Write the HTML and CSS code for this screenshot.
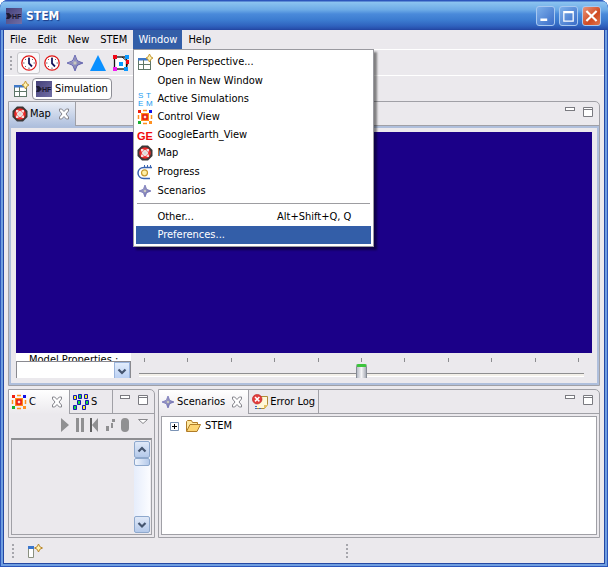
FILE: index.html
```html
<!DOCTYPE html>
<html lang="en">
<head>
<meta charset="utf-8">
<title>STEM</title>
<link rel="stylesheet" href="styles.css">
</head>
<body>
<svg class="defs" aria-hidden="true">
  <defs>
    <linearGradient id="hfFill" x1="0" y1="0" x2="1" y2="1">
      <stop offset="0" stop-color="#454079"/><stop offset="1" stop-color="#716fa6"/>
    </linearGradient>
    <linearGradient id="gemFill" x1="0" y1="0" x2="1" y2="1">
      <stop offset="0" stop-color="#c4c4ec"/><stop offset="1" stop-color="#5a5aa0"/>
    </linearGradient>
    <symbol id="hf" viewBox="0 0 16 16">
      <rect width="16" height="16" fill="url(#hfFill)"/>
      <path d="M0 5h3l3 3-3 3H0l1.500-3z" fill="#1c1a33"/>
      <text x="6" y="11" class="hf-text">HF</text>
    </symbol>
    <symbol id="clock" viewBox="0 0 16 16">
      <circle cx="8" cy="8" r="7.200" fill="#fff" stroke="#e01818" stroke-width="1.300"/>
      <path d="M8 2v1.500M8 12.500V14M2 8h1.500M12.500 8H14M4 4l1 1M12 4l-1 1M4 12l1-1" stroke="#445" stroke-width=".8"/>
      <path d="M8 3v5.500l3 3" stroke="#16165c" stroke-width="1.800" fill="none"/>
    </symbol>
    <symbol id="gem" viewBox="0 0 16 16">
      <path d="M8 0l2 5 1 1 5 2-5 2-1 1-2 5-2-5-1-1-5-2 5-2 1-1z" fill="url(#gemFill)" stroke="#5858a8" stroke-width=".8"/>
      <path d="M8 3v10M3 8h10" stroke="#8c8cb4" stroke-width="1.500"/>
      <rect x="6.500" y="6.500" width="3" height="3" fill="#c8c8c0"/>
    </symbol>
    <symbol id="graph" viewBox="0 0 16 16">
      <rect x="1.500" y="2" width="12" height="12" fill="#fff" stroke="#111" stroke-width="1.300"/>
      <path d="M9 2l6 5-2 7" stroke="#111" fill="none"/>
      <path d="M0 0h4v4H0z" fill="#f00818"/><path d="M12 0h4v4h-4zM6 7h4v4H6zM11 12h4v4h-4z" fill="#0a98ff"/>
      <path d="M0 12h4v4H0z" fill="#f018f0"/><path d="M13 5h3v4h-3z" fill="#f00818"/>
    </symbol>
    <symbol id="persp" viewBox="0 0 16 16">
      <rect x="1.500" y="4.500" width="12" height="11" fill="#fff" stroke="#5f7668"/>
      <path d="M1 4h10v2.500H1z" fill="#3f78c8"/>
      <path d="M6.500 6v9M2 10.500h11" stroke="#5f7668"/>
      <path d="M12.500 0l1.500 3 2 1-2 1.200L12.500 8 11 5.200 9 4l2-1z" fill="#fff2b0" stroke="#c0922a" stroke-width=".9"/>
    </symbol>
    <symbol id="stem" viewBox="0 0 16 16">
      <g class="stem-text"><text x="1" y="7">S</text><text x="9" y="7">T</text><text x="1" y="15">E</text><text x="9" y="15">M</text></g>
    </symbol>
    <symbol id="control" viewBox="0 0 16 16">
      <path d="M1 1h3v3H1z" fill="#f02010"/><path d="M12 1h3v3h-3z" fill="#1010e8"/>
      <path d="M1 12h3v3H1z" fill="#18b030"/><path d="M12 12h3v3h-3z" fill="#ff9020"/>
      <path d="M6 1.500h4M6 14.500h4M1.500 6v4M14.500 6v4" stroke="#ff9020" stroke-width="1.500"/>
      <rect x="4" y="4" width="8" height="8" fill="#ff8a18"/><rect x="6" y="6" width="4" height="4" fill="#ffe0d0" stroke="#e81010" stroke-width="1.500"/>
    </symbol>
    <symbol id="ge" viewBox="0 0 16 16">
      <text x="0" y="13" class="ge-text">GE</text>
    </symbol>
    <symbol id="map" viewBox="0 0 16 16">
      <path d="M5 .5h6L15.500 5v6L11 15.500H5L.5 11V5z" fill="#3c3838"/>
      <circle cx="8" cy="8" r="5.800" fill="#ea2a2a"/>
      <path d="M8 4.500L11.500 8 8 11.500 4.500 8z" fill="#f4f0f0"/>
      <path d="M4 4h2.500v2.500H4zM9.500 4H12v2.500H9.500zM4 9.500h2.500V12H4zM9.500 9.500H12V12H9.500z" fill="#f6dcdc"/>
      <path d="M6.500 6.500h3v3h-3z" fill="#d8d8d8"/>
    </symbol>
    <symbol id="progress" viewBox="0 0 16 16">
      <path d="M15 3.500H7c-8 0-8 11 0 11h6" fill="none" stroke="#3b64b0" stroke-width="1.500"/>
      <path d="M7.500 1v2.500M10.500 1v2.500M13.500 1v2.500" stroke="#3b64b0"/>
      <circle cx="7.500" cy="8.800" r="3" fill="#fff0a8" stroke="#c89a30" stroke-width="1.200"/>
    </symbol>
    <symbol id="cross" viewBox="0 0 12 12">
      <path d="M1.500 1h2.200L6 3.500 8.300 1h2.200v2L8 6l2.500 3v2H8.300L6 8.500 3.700 11H1.500V9L4 6 1.500 3z" fill="#fff" stroke="#85858c"/>
    </symbol>
    <symbol id="min" viewBox="0 0 12 12"><rect x="1.500" y="1.500" width="9" height="3" fill="#fff" stroke="#7a7a80"/></symbol>
    <symbol id="max" viewBox="0 0 12 12"><path d="M1.500 1.500h9v9h-9zM1.500 3.500h9" fill="#fff" stroke="#7a7a80"/></symbol>
    <symbol id="nodes" viewBox="0 0 16 16">
      <g stroke="#1616b8"><path d="M.5 1.500h3v4h-3zM11.500.500h3v4h-3zM9.500 11.500h3v4h-3z" fill="#f4f020"/>
      <path d="M5.500.500h3v4h-3zM4.500 6.500h3v4h-3zM12.500 6.500h3v4h-3zM.5 11.500h3v4h-3z" fill="#18d838"/></g>
    </symbol>
    <symbol id="error" viewBox="0 0 16 16">
      <path d="M6 2.500h9.500v8l-3 4H4.500" fill="#fff8d8" stroke="#b08c38"/>
      <path d="M12 15v-4h4z" fill="#e8c060"/>
      <path d="M3 12.500h2M3 14.500h2M7 14.500h2" stroke="#3c6cc0"/>
      <circle cx="5.200" cy="5.200" r="4.800" fill="#e23c3c" stroke="#b82020" stroke-width=".6"/>
      <path d="M3 3l4.400 4.400M7.400 3L3 7.400" stroke="#fff" stroke-width="1.500"/>
    </symbol>
    <symbol id="up" viewBox="0 0 10 10"><path d="M1.500 6.500L5 3l3.500 3.500" fill="none" stroke="#45556f" stroke-width="2.200"/></symbol>
    <symbol id="down" viewBox="0 0 10 10"><path d="M1.500 3L5 6.500 8.500 3" fill="none" stroke="#45556f" stroke-width="2.200"/></symbol>
  </defs>
</svg>

<div class="window">
  <header class="titlebar">
    <svg class="icon"><use href="#hf"/></svg>
    <h1 class="title">STEM</h1>
    <button class="caption" aria-label="Minimize"><svg viewBox="0 0 20 20"><path d="M4 13h8v3H4z" fill="#fff"/></svg></button>
    <button class="caption" aria-label="Maximize"><svg viewBox="0 0 20 20"><path d="M4.500 5h11v11h-11zM4 6h12" fill="none" stroke="#fff" stroke-width="1.500"/></svg></button>
    <button class="caption caption-close" aria-label="Close"><svg viewBox="0 0 20 20"><path d="M4 4l12 12M16 4L4 16" stroke="#fff" stroke-width="2.500"/></svg></button>
  </header>

  <div class="client">
    <nav class="menubar">
      <button class="menu-title">File</button>
      <button class="menu-title">Edit</button>
      <button class="menu-title">New</button>
      <button class="menu-title">STEM</button>
      <div class="menu-holder">
        <button class="menu-title menu-open" aria-expanded="true">Window</button>
        <div class="menu" role="menu">
          <button class="item item-tall" role="menuitem"><svg class="icon"><use href="#persp"/></svg><span>Open Perspective...</span></button>
          <button class="item" role="menuitem"><span class="icon"></span><span>Open in New Window</span></button>
          <button class="item" role="menuitem"><svg class="icon"><use href="#stem"/></svg><span>Active Simulations</span></button>
          <button class="item" role="menuitem"><svg class="icon"><use href="#control"/></svg><span>Control View</span></button>
          <button class="item" role="menuitem"><svg class="icon"><use href="#ge"/></svg><span>GoogleEarth_View</span></button>
          <button class="item" role="menuitem"><svg class="icon"><use href="#map"/></svg><span>Map</span></button>
          <button class="item item-tall" role="menuitem"><svg class="icon"><use href="#progress"/></svg><span>Progress</span></button>
          <button class="item" role="menuitem"><svg class="icon icon-inset"><use href="#gem"/></svg><span>Scenarios</span></button>
          <hr class="rule">
          <button class="item" role="menuitem"><span class="icon"></span><span>Other...</span><span class="shortcut">Alt+Shift+Q, Q</span></button>
          <button class="item item-active" role="menuitem"><span class="icon"></span><span>Preferences...</span></button>
        </div>
      </div>
      <button class="menu-title">Help</button>
    </nav>

    <div class="toolbar">
      <span class="grip"></span>
      <button class="tool tool-hot" aria-label="Run"><svg class="icon"><use href="#clock"/></svg></button>
      <button class="tool" aria-label="Step"><svg class="icon"><use href="#clock"/></svg></button>
      <button class="tool" aria-label="New scenario"><svg class="icon"><use href="#gem"/></svg></button>
      <button class="tool" aria-label="New model"><svg class="icon" viewBox="0 0 16 16"><path d="M8 0l8 16H0z" fill="#0a90ff"/></svg></button>
      <button class="tool" aria-label="New graph"><svg class="icon"><use href="#graph"/></svg></button>
    </div>

    <div class="perspectives">
      <button class="tool" aria-label="Open perspective"><svg class="icon"><use href="#persp"/></svg></button>
      <button class="perspective"><svg class="icon"><use href="#hf"/></svg>Simulation</button>
    </div>

    <main class="workbench">
      <section class="view view-active">
        <div class="tabs">
          <button class="tab tab-focus"><svg class="icon"><use href="#map"/></svg>Map<svg class="cross"><use href="#cross"/></svg></button>
          <div class="view-buttons">
            <button aria-label="Minimize view"><svg><use href="#min"/></svg></button>
            <button aria-label="Maximize view"><svg><use href="#max"/></svg></button>
          </div>
        </div>
        <div class="map-body">
          <div class="canvas"></div>
          <div class="map-controls">
            <div class="model">
              <label class="model-label" for="model">Model Properties :</label>
              <div class="combo">
                <select id="model"><option></option></select>
                <svg class="combo-arrow"><use href="#down"/></svg>
              </div>
            </div>
            <div class="scale">
              <div class="ticks"><i></i><i></i><i></i><i></i><i></i><i></i><i></i><i></i><i></i><i></i><i></i></div>
              <input class="slider" type="range" min="0" max="100" value="50" aria-label="Gain">
            </div>
          </div>
        </div>
      </section>

      <div class="lower">
        <section class="view view-left">
          <div class="tabs">
            <button class="tab tab-wide"><svg class="icon"><use href="#control"/></svg>C<svg class="cross"><use href="#cross"/></svg></button>
            <button class="tab tab-back"><svg class="icon"><use href="#nodes"/></svg>S</button>
            <div class="view-buttons">
              <button aria-label="Minimize view"><svg><use href="#min"/></svg></button>
              <button aria-label="Maximize view"><svg><use href="#max"/></svg></button>
            </div>
          </div>
          <div class="playbar">
            <svg viewBox="0 0 88 16">
              <g fill="#909092"><path d="M1 1l8 7-8 7zM16 1h3v14h-3zM21 1h3v14h-3zM38 1v14l-6-7zM46 9h3v5h-3zM51 6h2v5h-2zM52 2h3v3h-3z"/><rect x="61" y="1" width="8" height="14" rx="4"/></g>
              <path d="M31 1v14" stroke="#333" stroke-width="1.500"/>
              <path d="M78.500 2.500h9L83 6.500z" fill="#fff" stroke="#88888c"/>
            </svg>
          </div>
          <div class="pane pane-scroll">
            <div class="scrollbar">
              <button aria-label="Scroll up"><svg><use href="#up"/></svg></button>
              <span class="scroll-thumb"></span>
              <button class="scroll-end" aria-label="Scroll down"><svg><use href="#down"/></svg></button>
            </div>
          </div>
        </section>

        <section class="view view-right">
          <div class="tabs">
            <button class="tab tab-scenarios"><svg class="icon icon-inset"><use href="#gem"/></svg>Scenarios<svg class="cross"><use href="#cross"/></svg></button>
            <button class="tab tab-back"><svg class="icon"><use href="#error"/></svg>Error Log</button>
            <div class="view-buttons">
              <button aria-label="Minimize view"><svg><use href="#min"/></svg></button>
              <button aria-label="Maximize view"><svg><use href="#max"/></svg></button>
            </div>
          </div>
          <div class="pane pane-tree">
            <button class="tree-row">
              <svg class="expander" viewBox="0 0 9 9"><path d="M.5.500h8v8h-8z" fill="#fff" stroke="#7b93b5"/><path d="M2 4.500h5M4.500 2v5" stroke="#000"/></svg>
              <svg class="icon" viewBox="0 0 16 16"><path d="M1.500 13V3.500l1-1h4l1 2h5V7" fill="#ffe9a0" stroke="#b07c28"/><path d="M1.500 13.500l3.500-7h10.500l-3.500 7z" fill="#fcd472" stroke="#b07c28"/></svg>
              STEM
            </button>
          </div>
        </section>
      </div>
    </main>

    <footer class="status">
      <div class="status-part"><span class="grip"></span>
        <svg class="icon" viewBox="0 0 16 16"><path d="M1.500 3.500h5v11h-5z" fill="#fff" stroke="#8a9080"/><path d="M1 3h6v3H1z" fill="#3a76cc"/><path d="M11.500 1l1.300 2.700L15.500 5l-2.700 1.300L11.500 9l-1.300-2.700L7.500 5l2.700-1.300z" fill="#fff2b0" stroke="#b8862c"/></svg>
      </div>
      <div class="status-part"><span class="grip"></span></div>
    </footer>
  </div>
</div>
</body>
</html>
```
FILE: styles.css
```css
* { box-sizing: border-box; }

:root {
  --face: #ebe9ed;
  --line: #a0a0a6;
  --blue: #335ea8;
}

html, body { height: 100%; }

body {
  margin: 0;
  background: #fff;
  color: #000;
  font-family: "DejaVu Sans Condensed", "DejaVu Sans", Tahoma, sans-serif;
  font-size: 11px;
  line-height: 14px;
}

button {
  margin: 0;
  padding: 0;
  border: 0;
  background: none;
  color: inherit;
  font: inherit;
  white-space: nowrap;
}

svg { display: block; flex: none; }
.defs { position: absolute; width: 0; height: 0; }
.icon { flex: none; width: 16px; height: 16px; }
.icon-inset { padding: 2px; }
.hf-text { fill: #17152b; font: bold 7px "Liberation Sans", sans-serif; }
.stem-text { fill: #1a9af0; font: 8px "Liberation Sans", sans-serif; }
.ge-text { fill: #f00c0c; font: bold 11px "Liberation Sans", sans-serif; }

.window {
  display: flex;
  flex-direction: column;
  height: 100%;
  padding: 0 4px 4px;
  overflow: hidden;
  border-radius: 8px 8px 0 0;
  background: #3a6fd0;
  box-shadow: inset 0 0 0 1px #2c56bc, inset 0 0 0 3px #6f9ee0;
}

.titlebar {
  display: flex;
  align-items: center;
  flex: none;
  gap: 4px;
  height: 30px;
  margin: 0 -4px;
  padding: 2px 7px 0 6px;
  border-radius: 8px 8px 0 0;
  background: linear-gradient(#2c56bc 0, #2c56bc 1px, #8cc4f0 2px, #6caae6 10px, #4a8ada 14px, #3c7cd0 20px, #2f62be 26px, #2448a4 30px);
}

.title {
  flex: 1;
  margin: 0;
  color: #fff;
  font-size: 12px;
  line-height: 18px;
  text-shadow: 1px 1px 1px #1c3c88;
}

.caption {
  width: 19px;
  height: 20px;
  border: 1px solid #a8c8f0;
  border-radius: 3px;
  background: linear-gradient(135deg, #7db0ea, #3a6cc8);
}
.caption svg { width: 100%; height: 100%; }
.caption-close { background: linear-gradient(135deg, #e8957c, #d04a22 60%, #e07850); }

.client {
  display: flex;
  flex: 1;
  flex-direction: column;
  min-height: 0;
  background: var(--face);
  box-shadow: 0 0 0 1px #2448a4;
}

.menubar {
  display: flex;
  flex: none;
  gap: 1px;
  height: 20px;
  padding-left: 1px;
  border-bottom: 1px solid #fff;
}
.menu-title { height: 19px; padding: 0 5px; }
.menu-holder { position: relative; }
.menu-open { background: var(--blue); color: #fff; }

.menu {
  position: absolute;
  z-index: 2;
  top: 19px;
  left: 0;
  width: 241px;
  padding: 2px;
  border: 1px solid #9a9aa0;
  background: #fff;
  box-shadow: 3px 3px 2px rgba(0, 0, 0, .45);
}
.item {
  display: flex;
  align-items: center;
  gap: 4px;
  width: 100%;
  height: 18px;
  padding: 0 20px 0 1px;
  text-align: left;
}
.item-tall { height: 20px; }
.item-active { background: var(--blue); color: #fff; }
.shortcut { margin-left: auto; }
.rule { height: 1px; margin: 3px 1px 4px; border: 0; background: #9d9da1; }

.toolbar, .perspectives {
  display: flex;
  align-items: center;
  flex: none;
  height: 26px;
  padding: 0 5px;
  border-bottom: 1px solid #fff;
}
.perspectives { height: 25px; border: 0; }
.grip {
  width: 3px;
  height: 14px;
  margin: 0 4px 0 1px;
  background: radial-gradient(circle at 1px 1px, #a6a6ac 1px, transparent 1px) 0 0 / 3px 4px;
}
.tool {
  display: flex;
  align-items: center;
  justify-content: center;
  width: 23px;
  height: 22px;
}
.tool-hot { border: 1px solid #c8c8cc; border-radius: 3px; background: #f8f8fa; }
.perspective {
  display: flex;
  align-items: center;
  gap: 3px;
  height: 22px;
  padding: 0 3px;
  border: 1px solid #8e8e96;
  border-radius: 4px;
  background: #fff;
}

.workbench {
  display: flex;
  flex: 1;
  flex-direction: column;
  gap: 3px;
  min-height: 0;
  padding: 0 4px;
}
.view {
  display: flex;
  flex-direction: column;
  min-width: 0;
  border: 1px solid var(--line);
  border-radius: 0 5px 0 0;
}
.view-active { flex: 1; min-height: 0; }

.tabs {
  display: flex;
  flex: none;
  height: 24px;
  border-bottom: 1px solid var(--line);
}
.tab {
  display: flex;
  align-items: center;
  gap: 2px;
  margin-bottom: -1px;
  padding: 0 5px 0 3px;
  border-right: 1px solid var(--line);
  background: linear-gradient(#fff, var(--face));
}
.tab-focus { background: linear-gradient(#e9edf6, #afc0de); }
.tab-back { min-width: 43px; margin: 0; padding: 0 3px; background: none; }
.cross { width: 12px; height: 12px; margin-left: 5px; }
.tab-wide .cross { margin-left: auto; }
.tab-wide { width: 61px; padding: 0 6px 0 2px; }
.view-buttons {
  display: flex;
  gap: 6px;
  margin-left: auto;
  padding: 4px 5px 0 0;
}
.view-buttons button { height: 12px; }
.view-buttons svg { width: 12px; height: 12px; }

.map-body {
  display: flex;
  flex: 1;
  flex-direction: column;
  min-height: 0;
  padding: 4px 5px 5px;
  border: 2px solid #afbfdc;
}
.canvas { flex: 1; background: #1b0088; }
.map-controls {
  display: flex;
  flex: none;
  gap: 8px;
  height: 25px;
  overflow: hidden;
}
.model { flex: none; width: 115px; background: #fff; }
.model-label {
  display: block;
  height: 8px;
  padding-left: 13px;
  overflow: hidden;
}
.combo { position: relative; }
.combo select {
  display: block;
  width: 100%;
  height: 21px;
  border: 1px solid #8a8a90;
  border-radius: 0;
  appearance: none;
  background: #fff;
  font: inherit;
}
.combo-arrow {
  position: absolute;
  top: 1px;
  right: 1px;
  width: 16px;
  height: 19px;
  padding: 3px 2px;
  border: 1px solid #9ab4dc;
  background: linear-gradient(#e2edfc, #b6cdf2);
  pointer-events: none;
}

.scale { flex: 1; padding: 5px 8px 0 0; }
.ticks {
  display: flex;
  justify-content: space-between;
  padding: 0 5px;
}
.ticks i { width: 1px; height: 4px; background: #8c8c90; }
.slider {
  display: block;
  width: 100%;
  height: 26px;
  margin: 0;
  appearance: none;
  background: none;
}
.slider::-webkit-slider-runnable-track {
  height: 4px;
  border-top: 1px solid #8e8e90;
  border-bottom: 1px solid #fff;
  background: #f3f0ea;
}
.slider::-webkit-slider-thumb {
  width: 11px;
  height: 22px;
  margin-top: -10px;
  appearance: none;
  border: 1px solid #858b94;
  border-top: 3px solid #3cc43c;
  border-radius: 2px;
  background: linear-gradient(90deg, #b8bcc6, #f4f4f6 50%, #a8acb6);
}

.lower { display: flex; flex: none; gap: 3px; height: 149px; }
.view-left { flex: none; width: 147px; }
.view-right { flex: 1; }
.playbar { display: flex; justify-content: flex-end; flex: none; height: 24px; padding: 3px 6px 0; }
.playbar svg { width: 88px; height: 16px; }
.pane { flex: 1; margin: 2px; border: 1px solid var(--line); }
.pane-scroll {
  display: flex;
  justify-content: flex-end;
  margin-top: 0;
  padding: 1px;
  border-top: 2px solid #8e8e92;
}
.scrollbar {
  display: flex;
  flex-direction: column;
  width: 16px;
  background: linear-gradient(90deg, #e6edfb, #fbfcff);
}
.scrollbar button, .scroll-thumb {
  width: 16px;
  height: 17px;
  padding: 3px 2px;
  border: 1px solid #8ea8cc;
  border-radius: 2px;
  background: linear-gradient(#e0e9f8, #b4c9ea);
}
.scrollbar svg { width: 10px; height: 10px; }
.scroll-thumb { height: 8px; background: linear-gradient(90deg, #f0f5fd, #b4c9ea); }
.scrollbar .scroll-end { margin-top: auto; }

.tab-scenarios { gap: 1px; padding-left: 1px; }
.pane-tree { padding: 1px 8px; background: #fff; }
.tree-row { display: flex; align-items: center; gap: 4px; height: 16px; }
.expander { width: 9px; height: 9px; margin-right: 2px; }

.status { display: flex; flex: none; height: 25px; padding: 0 7px; }
.status-part { display: flex; flex: 1; align-items: center; gap: 8px; }
.status .status-part:first-child { flex: 0 0 57%; }
```
